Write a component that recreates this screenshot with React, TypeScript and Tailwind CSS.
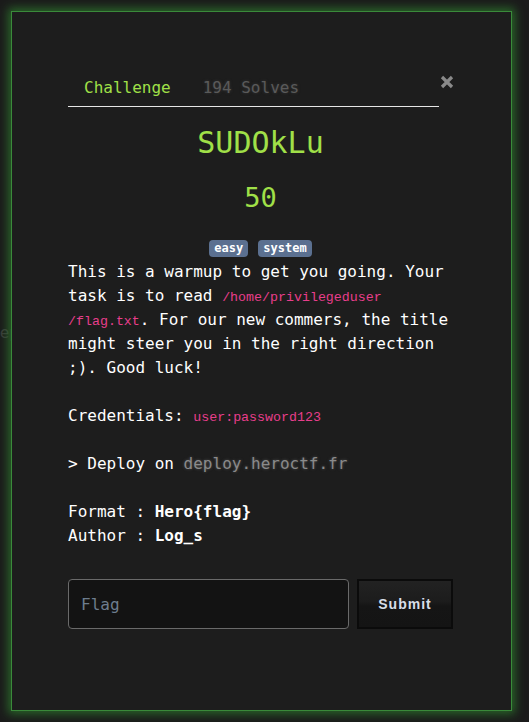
const mono = "font-['DejaVu_Sans_Mono',monospace]";

function Badge({ label }: { label: string }) {
  return (
    <span className="inline-block h-[17px] rounded-[4px] bg-[#5b7090] px-[5px] text-[12px] font-bold leading-[17px] text-white">
      {label}
    </span>
  );
}

function Code({ children }: { children: React.ReactNode }) {
  return <code className="text-[13.3px] leading-none text-[#e83e8c]">{children}</code>;
}

export default function App() {
  return (
    <div className={`relative min-h-[722px] overflow-hidden bg-[#1b1b1b] p-[11px] ${mono}`}>
      {/* page behind the modal */}
      <span className="absolute left-[-10px] top-[321px] text-[16px] text-[#3a3a3a]">Dep</span>

      <div className="relative z-10 h-[700px] w-[501px] border border-[#3a8a3a] bg-[#1d1d1d] pl-[56px] pt-[54px] shadow-[0_0_9px_3px_rgba(46,125,46,0.75)]">
        <button className="absolute left-[428px] top-[63px] flex h-[14px] w-[14px] items-center justify-center">
          <svg width="14" height="14" viewBox="0 0 14 14">
            <path d="M2 2 L12 12 M12 2 L2 12" stroke="#8a8a8a" strokeWidth="3.2" strokeLinecap="butt" />
          </svg>
        </button>

        <div className="w-[385px]">
          <div className="flex w-[371px] border-b border-[#e6e6e6] text-[16px] leading-6">
            <span className="px-4 pb-[6px] pt-[10px] text-[#a0e048]">Challenge</span>
            <span className="px-4 pb-[6px] pt-[10px] text-[#5a5a5a] [text-shadow:0_0_3px_#3a3a3a]">194 Solves</span>
          </div>

          <h1 className="mt-[18px] text-center text-[30px] leading-[36px] text-[#a0e048]">SUDOkLu</h1>
          <div className="mt-[19px] text-center text-[27px] leading-[36px] text-[#a0e048]">50</div>

          <div className="mt-[24px] flex justify-center gap-[10px]">
            <Badge label="easy" />
            <Badge label="system" />
          </div>

          <div className="mt-[3px] text-[16px] leading-6 text-white">
            <p>
              This is a warmup to get you going. Your task is to read <Code>/home/privilegeduser</Code>
              <br />
              <Code>/flag.txt</Code>. For our new commers, the title might steer you in the right direction ;). Good
              luck!
            </p>
            <p className="mt-6">
              Credentials: <Code>user:password123</Code>
            </p>
            <p className="mt-6">
              &gt; Deploy on <span className="text-[#8a8a8a] [text-shadow:0_0_3px_#555]">deploy.heroctf.fr</span>
            </p>
            <p className="mt-6">
              Format : <b>Hero{"{flag}"}</b>
              <br />
              Author : <b>Log_s</b>
            </p>
          </div>

          <form className="mt-[31px] flex gap-2" onSubmit={(e) => e.preventDefault()}>
            <input
              placeholder="Flag"
              className="h-[50px] w-[281px] rounded-[4px] border border-[#6a6a6a] bg-[#131313] px-3 text-[16px] text-white outline-none placeholder:text-[#6d7d8e]"
            />
            <button
              type="submit"
              className="h-[50px] w-[96px] border-2 border-[#0b0b0b] bg-[linear-gradient(#222_0%,#1c1c1c_45%,#151515_55%,#141414_100%)] font-['Liberation_Sans',Arial,sans-serif] text-[14px] font-bold tracking-[1px] text-[#d8dee8]"
            >
              Submit
            </button>
          </form>
        </div>
      </div>
    </div>
  );
}
